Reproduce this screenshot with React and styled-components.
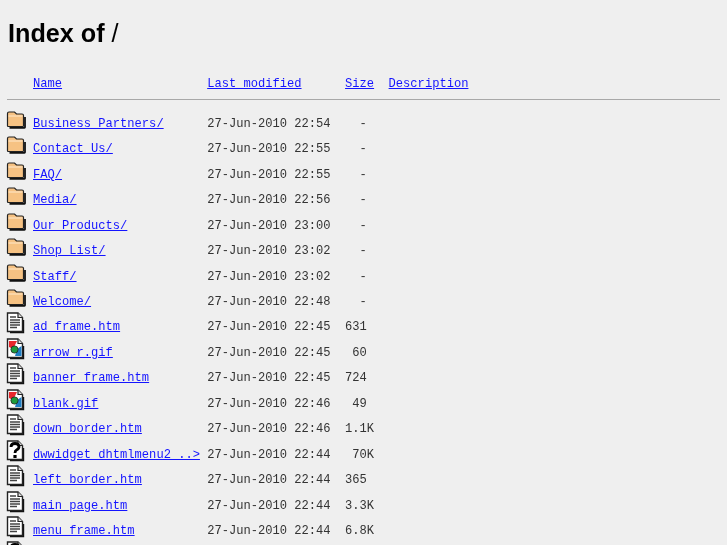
import React from "react";
import styled, { createGlobalStyle } from "styled-components";

const GlobalStyle = createGlobalStyle`
  html, body {
    margin: 0;
    height: 545px;
    overflow: hidden;
    background: #efefef;
  }
`;

const Page = styled.div`
  padding: 18px 7px 0 7px;
  color: #000;
  filter: blur(0.35px);
`;

const Heading = styled.h1`
  margin: 0 0 0 1px;
  font: bold 25.2px/30px "Liberation Sans", Arial, sans-serif;
`;

const Slash = styled.span`
  font-weight: normal;
`;

const Listing = styled.div`
  font: 12.1px/16px "Liberation Mono", monospace;
  color: #333;
`;

const Row = styled.div`
  display: grid;
  grid-template-columns: 26px 24ch 19ch 6ch 1fr;
  align-items: end;
  height: 25.44px;
  white-space: pre;
`;

const HeaderRow = styled(Row)`
  margin-top: 28px;
  height: 16px;
`;

const Rule = styled.hr`
  border: 0;
  height: 1px;
  background: #a8a8a8;
  margin: 7px 0 6.5px 0;
`;

const Link = styled.a`
  color: #1414ff;
  text-decoration: underline;
`;

const Size = styled.span`
  padding-left: ${(p) => p.$pad}ch;
`;

const IconBox = styled.svg`
  display: block;
  width: 20px;
  height: 22px;
  margin: 0 0 1px -1px;
`;

const FolderIcon = () => (
  <IconBox viewBox="0 0 20 22">
    <path d="M3.5 18.8 H18.5 Q19 18.8 19 18.3 V8" fill="none" stroke="#111" strokeWidth="1.8" />
    <path d="M1.5 7 L1.5 4.5 Q1.5 3 3 3 L8.5 3 L10.5 5 L16 5 Q17.5 5 17.5 6.5 L17.5 16.8 Q17.5 17.5 16.8 17.5 L2.2 17.5 Q1.5 17.5 1.5 16.8 Z" fill="#f6c283" stroke="#222" strokeWidth="1.2" />
    <path d="M2.5 7 H16.5" stroke="#ffe9cc" strokeWidth="1" />
  </IconBox>
);

const PageOutline = () => (
  <>
    <path d="M17.5 8 V20.5 H4" fill="none" stroke="#111" strokeWidth="1.4" />
    <path d="M1.5 1 H12 L16.5 5.5 V19.5 H1.5 Z" fill="#fff" stroke="#222" strokeWidth="1.4" />
    <path d="M12 1 V5.5 H16.5" fill="#ddd" stroke="#222" strokeWidth="1.2" />
  </>
);

const TextIcon = () => (
  <IconBox viewBox="0 0 20 22">
    <PageOutline />
    <path d="M4 5 H10 M4 8 H14 M4 10.5 H14 M4 13 H14 M4 15.5 H11" stroke="#444" strokeWidth="1.5" />
  </IconBox>
);

const ImageIcon = () => (
  <IconBox viewBox="0 0 20 22">
    <PageOutline />
    <path d="M3 3 H11 L7 11 L3 9 Z" fill="#e8282c" />
    <path d="M11 11 L15.5 8 V18 H9 Z" fill="#1f7fc4" />
    <circle cx="8.5" cy="11.5" r="3.6" fill="#1d9c3c" stroke="#222" strokeWidth="0.8" />
  </IconBox>
);

const UnknownIcon = () => (
  <IconBox viewBox="0 0 20 22">
    <PageOutline />
    <path d="M5 7 Q5 3.5 9 3.5 Q13 3.5 13 6.8 Q13 8.8 10.8 9.8 Q9 10.6 9 13" fill="none" stroke="#000" strokeWidth="2.8" />
    <path d="M7.4 15 H10.6 V18 H7.4 Z" fill="#000" />
  </IconBox>
);

const icons = { folder: FolderIcon, text: TextIcon, image: ImageIcon, unknown: UnknownIcon };

const entries = [
  ["folder", "Business Partners/", "27-Jun-2010 22:54", "-", 2],
  ["folder", "Contact Us/", "27-Jun-2010 22:55", "-", 2],
  ["folder", "FAQ/", "27-Jun-2010 22:55", "-", 2],
  ["folder", "Media/", "27-Jun-2010 22:56", "-", 2],
  ["folder", "Our Products/", "27-Jun-2010 23:00", "-", 2],
  ["folder", "Shop List/", "27-Jun-2010 23:02", "-", 2],
  ["folder", "Staff/", "27-Jun-2010 23:02", "-", 2],
  ["folder", "Welcome/", "27-Jun-2010 22:48", "-", 2],
  ["text", "ad_frame.htm", "27-Jun-2010 22:45", "631", 0],
  ["image", "arrow_r.gif", "27-Jun-2010 22:45", "60", 1],
  ["text", "banner_frame.htm", "27-Jun-2010 22:45", "724", 0],
  ["image", "blank.gif", "27-Jun-2010 22:46", "49", 1],
  ["text", "down_border.htm", "27-Jun-2010 22:46", "1.1K", 0],
  ["unknown", "dwwidget_dhtmlmenu2_..>", "27-Jun-2010 22:44", "70K", 1],
  ["text", "left_border.htm", "27-Jun-2010 22:44", "365", 0],
  ["text", "main_page.htm", "27-Jun-2010 22:44", "3.3K", 0],
  ["text", "menu_frame.htm", "27-Jun-2010 22:44", "6.8K", 0],
  // only the top of this icon shows at the bottom edge
  ["unknown", "", "", "", 0],
];

export default function App() {
  return (
    <Page>
      <GlobalStyle />
      <Heading>
        Index of <Slash>/</Slash>
      </Heading>
      <Listing>
        <HeaderRow>
          <span />
          <span><Link href="#">Name</Link></span>
          <span><Link href="#">Last modified</Link></span>
          <span><Link href="#">Size</Link></span>
          <span><Link href="#">Description</Link></span>
        </HeaderRow>
        <Rule />
        {entries.map(([kind, name, date, size, pad], i) => {
          const Icon = icons[kind];
          return (
            <Row key={i}>
              <Icon />
              <span><Link href="#">{name}</Link></span>
              <span>{date}</span>
              <Size $pad={pad}>{size}</Size>
              <span />
            </Row>
          );
        })}
      </Listing>
    </Page>
  );
}
